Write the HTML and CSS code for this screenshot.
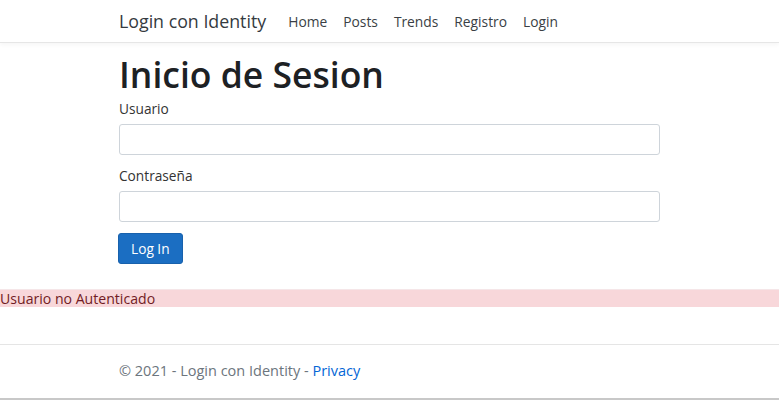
FILE: index.html
```html
<!DOCTYPE html>
<html lang="es">
<head>
<meta charset="utf-8">
<title>Inicio de Sesion - Login con Identity</title>
<link rel="stylesheet" href="styles.css">
</head>
<body>
<header class="navbar">
  <div class="container nav-inner">
    <a class="brand" href="#">Login con Identity</a>
    <nav class="nav-links">
      <a href="#">Home</a>
      <a href="#">Posts</a>
      <a href="#">Trends</a>
      <a href="#">Registro</a>
      <a href="#">Login</a>
    </nav>
  </div>
</header>
<main class="container main">
  <h1 class="title">Inicio de Sesion</h1>
  <form class="form">
    <div class="group">
      <label class="label" for="u">Usuario</label>
      <input class="input" id="u" type="text">
    </div>
    <div class="group">
      <label class="label" for="p">Contraseña</label>
      <input class="input" id="p" type="password">
    </div>
    <button class="btn" type="button">Log In</button>
  </form>
</main>
<div class="alert">Usuario no Autenticado</div>
<footer class="footer">
  <div class="container">© 2021 - Login con Identity - <a href="#">Privacy</a></div>
</footer>
<div class="bottom-edge"></div>
</body>
</html>
```
FILE: styles.css
```css
* { box-sizing: border-box; }
html, body { margin: 0; padding: 0; }
body {
  font-family: "Open Sans", "Noto Sans", sans-serif;
  font-size: 13.7px;
  color: #212529;
  background: #fff;
  height: 400px;
  display: flex;
  flex-direction: column;
  overflow: hidden;
}
a { text-decoration: none; }
.container {
  width: 541px;
  margin-left: 119px;
}
.navbar {
  height: 43px;
  border-bottom: 1px solid #e6e6e6;
  box-shadow: 0 2px 4px rgba(0,0,0,0.04);
  display: flex;
  align-items: center;
}
.nav-inner {
  display: flex;
  align-items: center;
  gap: 22px;
}
.brand {
  color: #343a40;
  font-size: 17.8px;
  white-space: nowrap;
}
.nav-links {
  display: flex;
  gap: 16px;
}
.nav-links a {
  color: #3a3f45;
  font-size: 13.8px;
}
.main { padding-top: 10px; }
.title {
  font-size: 35.5px;
  font-weight: 600;
  line-height: 1.2;
  margin: 0 0 3px 0;
  color: #1d2124;
}
.group { margin-bottom: 11px; }
.group + .group { margin-top: 2px; }
.label {
  display: block;
  color: #333;
  margin-bottom: 6px;
  line-height: 19px;
}
.input {
  display: block;
  width: 100%;
  height: 31px;
  border: 1px solid #ced4da;
  border-radius: 3px;
  background: #fff;
}
.btn {
  background: #1b6ec2;
  color: #fff;
  border: 1px solid #1861ac;
  border-radius: 3px;
  height: 31px;
  padding: 0 12px;
  font-family: inherit;
  font-size: 13.7px;
  font-weight: 500;
  margin-left: -1px;
  display: block;
}
.alert {
  margin-top: 25px;
  background: #f8d7da;
  color: #721c24;
  font-size: 14.1px;
  height: 18px;
  line-height: 18px;
  border-top: 1px solid #f5e6e8;
}
.footer {
  margin-top: 37px;
  border-top: 1px solid #e5e5e5;
  color: #6c757d;
  font-size: 14.5px;
  flex: 1;
  padding-top: 16px;
}
.footer a { color: #0366d6; }
.bottom-edge {
  height: 2px;
  background: #c8c8c8;
}
```
